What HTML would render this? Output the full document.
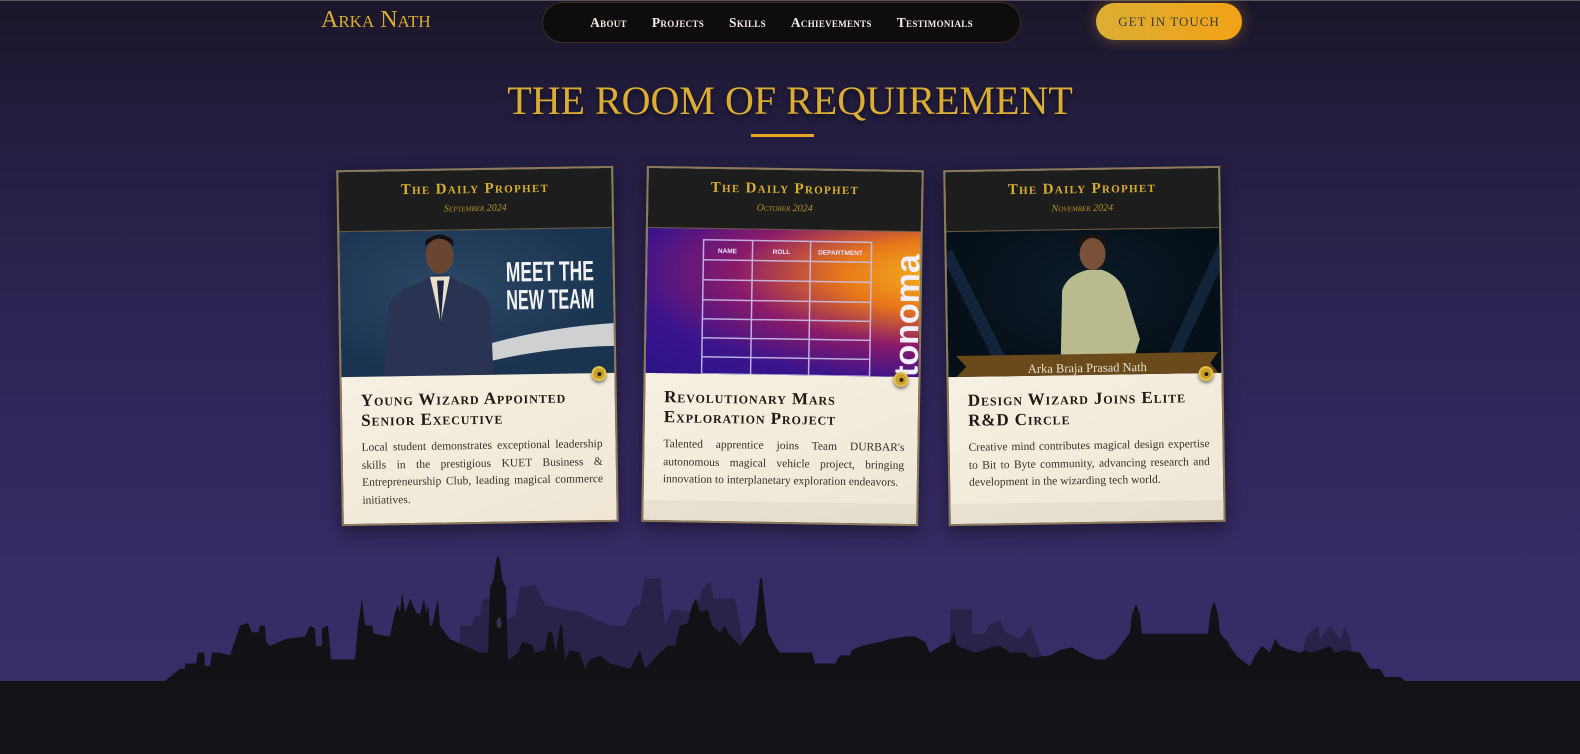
<!DOCTYPE html>
<html><head><meta charset="utf-8">
<style>
*{margin:0;padding:0;box-sizing:border-box}
html,body{width:1580px;height:754px;overflow:hidden}
body{position:relative;background:linear-gradient(180deg,#1b1729 0%,#221c3d 15%,#2e2656 45%,#372c66 80%,#3a2e6a 100%);font-family:"Liberation Serif",serif}
.topline{position:absolute;left:0;top:0;width:1580px;height:1px;background:#5a5560}
.logo{position:absolute;left:321px;top:7px;color:#d9ad34;font-size:24px;letter-spacing:0px;font-variant:small-caps}
.nav{position:absolute;left:542px;top:2px;width:479px;height:41px;border-radius:21px;background:#0f0c0e;border:1px solid #3a3020;display:flex;align-items:center;justify-content:center;gap:25px}
.nav span{color:#f2ece0;font-size:13.5px;font-variant:small-caps;font-weight:bold;letter-spacing:0.3px}
.btn{position:absolute;left:1096px;top:3px;width:146px;height:37px;border-radius:19px;background:linear-gradient(90deg,#dcae34,#f2a216);color:#3a3a3a;font-size:13px;letter-spacing:1px;display:flex;align-items:center;justify-content:center;box-shadow:0 0 14px rgba(240,170,40,.35)}
h1{position:absolute;left:0;width:1580px;top:77px;text-align:center;color:#dcad33;font-size:40px;font-weight:normal;letter-spacing:0px;text-shadow:0 3px 4px rgba(0,0,0,.5)}
.uline{position:absolute;left:751px;top:134px;width:63px;height:3px;background:#e9a820}
.card{position:absolute;width:277px;height:356px;border:2px solid #8c7a5a;background:linear-gradient(160deg,#fbf8ef,#efe7d4);box-shadow:0 6px 16px rgba(0,0,0,.45);overflow:hidden}
.hd{height:60px;background:#1d1d1d;text-align:center;border-bottom:1px solid #6b5a40}
.hd .t{color:#d6ad33;font-size:15px;font-weight:bold;font-variant:small-caps;letter-spacing:1.3px;padding-top:11px}
.hd .d{color:#b58f2a;font-size:10px;font-style:italic;font-variant:small-caps;margin-top:5px}
.img{height:145px;position:relative;overflow:hidden}
.body{padding:14px 13px 0 19px;position:relative}
.body h3{font-size:17px;font-variant:small-caps;font-weight:bold;color:#231814;line-height:20px;letter-spacing:0.9px}
.body p{font-size:11.5px;line-height:17.5px;color:#3a302a;text-align:justify;margin-top:9px}
.pin{position:absolute;width:15px;height:15px;border-radius:50%;background:#c9a02a;border:2px solid #e6c24a;box-shadow:0 2px 3px rgba(0,0,0,.5)}
.pin:after{content:"";position:absolute;left:3.5px;top:3.5px;width:4px;height:4px;border-radius:50%;background:#2a1a10}
.foot{position:absolute;left:0;right:0;bottom:0;height:20px;background:rgba(0,0,0,.04)}
.ground{position:absolute;left:0;top:681px;width:1580px;height:73px;background:#131217}
</style></head><body>
<div class="topline"></div>
<div class="logo">Arka Nath</div>
<div class="nav"><span>About</span><span>Projects</span><span>Skills</span><span>Achievements</span><span>Testimonials</span></div>
<div class="btn">GET IN TOUCH</div>
<h1>THE ROOM OF REQUIREMENT</h1>
<div class="uline"></div>

<div class="card" style="left:339px;top:168px;transform:rotate(-0.9deg)">
 <div class="hd"><div class="t">The Daily Prophet</div><div class="d">September 2024</div></div>
 <div class="img" style="background:radial-gradient(ellipse at 40% 40%,#2c4866,#1a3350 70%)">
  <svg width="277" height="145" style="position:absolute;left:0;top:0">
   <path d="M60 145 Q160 100 277 95 L277 118 Q180 118 100 145Z" fill="#cfd0d2"/>
   <path d="M42 145 L48 75 Q55 58 80 52 L92 44 L108 44 L120 52 Q146 60 150 78 L152 145Z" fill="#2a3352"/>
   <path d="M90 46 L100 92 L110 46Z" fill="#e8e0cc"/>
   <path d="M97 50 L100 95 L104 50Z" fill="#1c2240"/>
   <ellipse cx="100" cy="25" rx="14" ry="18" fill="#6a4632"/>
   <path d="M86 16 Q100 0 114 16 L114 10 Q100 -2 86 10Z" fill="#141010"/>
   <text x="166" y="52" fill="#f2f2f2" font-family="Liberation Sans" font-weight="bold" font-size="28" textLength="88" lengthAdjust="spacingAndGlyphs">MEET THE</text>
   <text x="166" y="80" fill="#f2f2f2" font-family="Liberation Sans" font-weight="bold" font-size="28" textLength="88" lengthAdjust="spacingAndGlyphs">NEW TEAM</text>
  </svg>
 </div>
 <div class="pin" style="left:250px;top:198px"></div>
 <div class="body"><h3>Young Wizard Appointed Senior Executive</h3>
 <p>Local student demonstrates exceptional leadership skills in the prestigious KUET Business &amp; Entrepreneurship Club, leading magical commerce initiatives.</p></div>
</div>

<div class="card" style="left:644px;top:168px;transform:rotate(0.9deg)">
 <div class="hd"><div class="t">The Daily Prophet</div><div class="d">October 2024</div></div>
 <div class="img" style="background:radial-gradient(ellipse at 110% 30%,#f4b820 0%,#e8781a 25%,#8a1a6a 50%,#3a148c 75%,#2a1488 100%)">
  <svg width="277" height="145" style="position:absolute;left:0;top:0">
   <g stroke="#c9bfe8" stroke-width="1.5" fill="none" opacity="0.9">
    <rect x="56" y="11" width="168" height="134"/>
    <line x1="105" y1="11" x2="105" y2="145"/><line x1="163" y1="11" x2="163" y2="145"/>
    <line x1="56" y1="31" x2="224" y2="31"/><line x1="56" y1="51" x2="224" y2="51"/><line x1="56" y1="71" x2="224" y2="71"/><line x1="56" y1="90" x2="224" y2="90"/><line x1="56" y1="109" x2="224" y2="109"/><line x1="56" y1="128" x2="224" y2="128"/>
   </g>
   <g fill="#e8e0ff" font-family="Liberation Sans" font-size="6.5" font-weight="bold" text-anchor="middle">
    <text x="80" y="24">NAME</text><text x="134" y="24">ROLL</text><text x="193" y="24">DEPARTMENT</text>
   </g>
   <text x="0" y="0" fill="#f4f0ff" font-family="Liberation Sans" font-weight="bold" font-size="34" transform="translate(272,145) rotate(-90)">tonoma</text>
  </svg>
 </div>
 <div class="pin" style="left:248px;top:200px"></div>
 <div class="body"><h3>Revolutionary Mars Exploration Project</h3>
 <p>Talented apprentice joins Team DURBAR's autonomous magical vehicle project, bringing innovation to interplanetary exploration endeavors.</p></div>
 <div class="foot"></div>
</div>

<div class="card" style="left:946px;top:168px;transform:rotate(-0.9deg)">
 <div class="hd"><div class="t">The Daily Prophet</div><div class="d">November 2024</div></div>
 <div class="img" style="background:radial-gradient(ellipse at 50% 40%,#0c1a2a,#061018 70%)">
  <svg width="277" height="145" style="position:absolute;left:0;top:0">
   <path d="M0 20 L60 145 M277 20 L217 145" stroke="#13243a" stroke-width="12"/>
   <path d="M112 145 L115 60 Q120 45 140 40 L155 40 Q172 46 178 62 L192 110 L180 145Z" fill="#b9bb8e"/>
   <ellipse cx="146" cy="24" rx="13" ry="16" fill="#7a5038"/>
   <path d="M132 16 Q146 0 160 16 L160 10 Q146 -2 132 10Z" fill="#1a1410"/>
   <path d="M8 124 L270 124 L262 135 L270 145 L8 145 L18 135Z" fill="#6a4a1a"/>
   <text x="139" y="142" fill="#e8e0d0" font-family="Liberation Serif" font-size="12.5" text-anchor="middle">Arka Braja Prasad Nath</text>
  </svg>
 </div>
 <div class="pin" style="left:250px;top:198px"></div>
 <div class="body"><h3>Design Wizard Joins Elite R&amp;D Circle</h3>
 <p>Creative mind contributes magical design expertise to Bit to Byte community, advancing research and development in the wizarding tech world.</p></div>
 <div class="foot"></div>
</div>

<svg width="1580" height="754" style="position:absolute;left:0;top:0">
 <g transform="translate(0,681) scale(1,1.35) translate(0,-681)">
 <path fill="#2a2248" d="M460 681 L460 640 L472 640 L475 633 L480 633 L483 620 L490 620 L493 640 L515 633 L520 612 L535 610 L545 625 L580 630 L610 640 L625 640 L635 625 L640 625 L645 605 L660 605 L665 640 L672 628 L690 630 L700 620 L703 612 L710 608 L714 620 L735 620 L745 660 L760 681Z M950 681 L950 628 L972 628 L972 646 L985 646 L988 640 L1000 636 L1005 645 L1020 650 L1030 640 L1040 660 L1060 681Z M1300 681 L1305 650 L1310 645 L1318 640 L1320 650 L1330 640 L1340 650 L1345 640 L1350 650 L1352 660 L1370 681Z"/>
 <path fill="#121116" d="M165 681 L170 678 L180 672 L185 672 L185 668 L196 668 L198 660 L204 660 L205 670 L210 670 L212 660 L220 660 L230 662 L240 640 L248 638 L252 645 L258 645 L260 640 L265 640 L266 652 L270 655 L285 650 L305 648 L310 640 L315 642 L316 655 L322 655 L322 642 L328 640 L331 665 L355 665 L358 640 L362 620 L365 640 L372 640 L374 646 L390 648 L395 630 L398 625 L400 630 L402 615 L405 630 L408 625 L410 620 L413 625 L416 630 L420 632 L424 620 L426 630 L428 625 L430 640 L432 640 L435 630 L438 620 L440 640 L450 650 L465 655 L480 660 L488 660 L490 612 L494 605 L496 592 L498 588 L500 592 L502 605 L506 612 L508 666 L518 660 L522 652 L532 654 L535 660 L545 658 L548 645 L552 645 L556 660 L560 640 L562 640 L565 665 L570 658 L580 660 L585 672 L590 665 L600 662 L610 668 L630 672 L640 658 L645 672 L660 660 L668 655 L675 655 L680 640 L688 638 L692 625 L696 620 L700 630 L708 628 L712 640 L720 645 L725 640 L728 645 L740 655 L755 640 L758 620 L760 605 L762 605 L764 620 L768 645 L775 655 L780 660 L790 660 L812 660 L815 668 L835 668 L840 662 L850 662 L852 658 L862 655 L880 652 L890 650 L905 648 L915 648 L925 652 L930 660 L940 655 L950 652 L954 645 L957 655 L975 660 L985 658 L990 656 L1000 655 L1010 660 L1020 660 L1025 660 L1030 664 L1050 662 L1060 658 L1072 656 L1080 660 L1095 665 L1105 665 L1115 660 L1120 655 L1125 650 L1130 645 L1132 632 L1134 628 L1136 624 L1138 628 L1140 632 L1142 646 L1208 646 L1210 632 L1212 626 L1214 622 L1216 626 L1218 632 L1220 646 L1228 652 L1232 660 L1250 670 L1255 662 L1262 655 L1270 660 L1275 650 L1280 655 L1290 658 L1300 660 L1305 658 L1310 660 L1320 658 L1330 655 L1335 660 L1345 658 L1360 660 L1370 672 L1380 672 L1385 678 L1400 678 L1405 681Z"/>
 <rect x="1142" y="659" width="66" height="6" fill="#121116"/>
 <path d="M1105 672 L1132 645 M1245 672 L1218 645 M1115 672 L1132 650 M1235 672 L1218 650" stroke="#121116" stroke-width="2"/>
 <ellipse cx="499" cy="638" rx="2.5" ry="4" fill="#3a3050"/>
 </g>
</svg>
<div class="ground"></div>
</body></html>
